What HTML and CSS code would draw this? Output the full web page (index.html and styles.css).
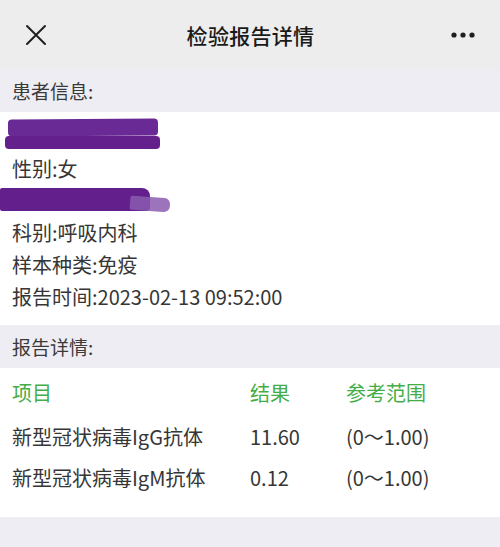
FILE: index.html
```html
<!DOCTYPE html>
<html lang="zh-CN">
<head>
<meta charset="utf-8">
<title>检验报告详情</title>
<link rel="stylesheet" href="styles.css">
</head>
<body>
<div class="page">
  <header class="topbar">
    <svg class="close" width="22" height="22" viewBox="0 0 22 22"><path d="M2 2 L20 20 M20 2 L2 20" stroke="#1f1f1f" stroke-width="2" stroke-linecap="round" fill="none"/></svg>
    <h1 class="title">检验报告详情</h1>
    <svg class="more" width="26" height="8" viewBox="0 0 26 8"><circle cx="4" cy="4" r="2.6" fill="#1f1f1f"/><circle cx="13" cy="4" r="2.6" fill="#1f1f1f"/><circle cx="22" cy="4" r="2.6" fill="#1f1f1f"/></svg>
  </header>

  <div class="band band-first">患者信息:</div>
  <section class="info">
    <div class="row redact-row"><span class="redact r1a"></span><span class="redact r1b"></span></div>
    <div class="row">性别:女</div>
    <div class="row redact-row"><span class="redact r2a"></span><span class="redact r2b"></span></div>
    <div class="row">科别:呼吸内科</div>
    <div class="row">样本种类:免疫</div>
    <div class="row">报告时间:2023-02-13 09:52:00</div>
  </section>

  <div class="band band-second">报告详情:</div>
  <section class="table">
    <div class="trow thead"><span>项目</span><span>结果</span><span>参考范围</span></div>
    <div class="trow"><span>新型冠状病毒IgG抗体</span><span>11.60</span><span>(0～1.00)</span></div>
    <div class="trow"><span>新型冠状病毒IgM抗体</span><span>0.12</span><span>(0～1.00)</span></div>
  </section>
  <div class="footer-band"></div>
</div>
</body>
</html>
```

FILE: styles.css
```css
html, body {
  margin: 0;
  padding: 0;
  background: #eeedf3;
}
body {
  font-family: "Noto Sans CJK SC", "Noto Sans", sans-serif;
  color: #363636;
}
.page {
  width: 500px;
  height: 547px;
  overflow: hidden;
  display: flex;
  flex-direction: column;
}
.topbar {
  height: 69px;
  background: #ededed;
  display: flex;
  align-items: center;
  justify-content: space-between;
  padding: 0 24px 0 25px;
  box-sizing: border-box;
}
.close {
  display: block;
}
.more {
  display: block;
}
.title {
  margin: 0;
  font-size: 21px;
  font-weight: 500;
  color: #1a1a1a;
  letter-spacing: 0.3px;
  padding-left: 4px;
}
.band {
  background: #eeedf3;
  height: 43px;
  box-sizing: border-box;
  padding-left: 12px;
  display: flex;
  align-items: center;
  font-size: 19px;
  color: #3a3a3a;
}
.info {
  background: #ffffff;
  padding: 9px 0 12px;
}
.row {
  height: 32px;
  line-height: 32px;
  font-size: 20px;
  padding-left: 12px;
  color: #363636;
}
.redact-row {
  position: relative;
}
.redact {
  position: absolute;
  background: #66228f;
  border-radius: 4px;
}
.r1a {
  left: 8px;
  top: -2px;
  width: 150px;
  height: 17px;
  background: #6a2a95;
  transform: rotate(-0.4deg);
}
.r1b {
  left: 5px;
  top: 15px;
  width: 155px;
  height: 13px;
  background: #64208d;
}
.r2a {
  left: 0;
  top: 3px;
  width: 150px;
  height: 23px;
  background: #63208c;
  border-radius: 2px 8px 4px 2px;
}
.r2b {
  left: 130px;
  top: 12px;
  width: 40px;
  height: 14px;
  background: #8a5cb0;
  opacity: 0.85;
  transform: rotate(4deg);
  border-radius: 2px 6px 6px 2px;
}
.table {
  background: #ffffff;
  padding: 5px 0 19px;
}
.trow {
  display: grid;
  grid-template-columns: 238px 96px 1fr;
  padding-left: 12px;
  height: 41px;
  line-height: 41px;
  font-size: 20px;
  color: #363636;
}
.thead {
  height: 40px;
  line-height: 40px;
  margin-bottom: 3px;
  color: #45ad48;
}
.footer-band {
  flex: 1;
  background: #eeedf3;
}
```
